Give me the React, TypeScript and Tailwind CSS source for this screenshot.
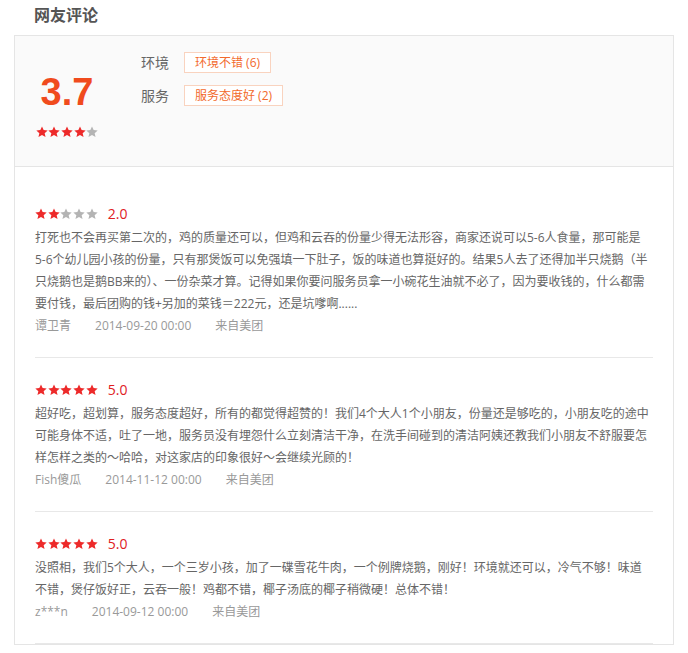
import React from "react";

const FONT = { fontFamily: '"Open Sans", "Noto Sans CJK SC", sans-serif' };

function Star({ on }: { on: boolean }) {
  return (
    <svg width="12" height="12" viewBox="0 0 24 24" className="block">
      <path
        d="M12 0.8l3.3 7.3 8 .8-6 5.4 1.8 7.9L12 18.1l-7.1 4.1 1.8-7.9-6-5.4 8-.8z"
        fill={on ? "#ed2a2a" : "#b4b4b4"}
      />
    </svg>
  );
}

function Stars({ n }: { n: number }) {
  return (
    <div className="flex gap-[0.7px]">
      {[0, 1, 2, 3, 4].map((i) => (
        <Star key={i} on={i < n} />
      ))}
    </div>
  );
}

type Review = { stars: number; score: string; text: string | string[]; name: string; date: string };

const reviews: Review[] = [
  {
    stars: 2,
    score: "2.0",
    text: [
      "打死也不会再买第二次的，鸡的质量还可以，但鸡和云吞的份量少得无法形容，商家还说可以5-6人食量，那可能是",
      "5-6个幼儿园小孩的份量，只有那煲饭可以免强填一下肚子，饭的味道也算挺好的。结果5人去了还得加半只烧鹅（半",
      "只烧鹅也是鹅BB来的）、一份杂菜才算。记得如果你要问服务员拿一小碗花生油就不必了，因为要收钱的，什么都需",
      "要付钱，最后团购的钱+另加的菜钱＝222元，还是坑嗲啊......",
    ],
    name: "谭卫青",
    date: "2014-09-20 00:00",
  },
  {
    stars: 5,
    score: "5.0",
    text: "超好吃，超划算，服务态度超好，所有的都觉得超赞的！我们4个大人1个小朋友，份量还是够吃的，小朋友吃的途中可能身体不适，吐了一地，服务员没有埋怨什么立刻清洁干净，在洗手间碰到的清洁阿姨还教我们小朋友不舒服要怎样怎样之类的～哈哈，对这家店的印象很好～会继续光顾的！",
    name: "Fish傻瓜",
    date: "2014-11-12 00:00",
  },
  {
    stars: 5,
    score: "5.0",
    text: "没照相，我们5个大人，一个三岁小孩，加了一碟雪花牛肉，一个例牌烧鹅，刚好！环境就还可以，冷气不够！味道不错，煲仔饭好正，云吞一般！鸡都不错，椰子汤底的椰子稍微硬！总体不错！",
    name: "z***n",
    date: "2014-09-12 00:00",
  },
];

export default function App() {
  return (
    <div className="w-[688px] h-[653px] overflow-hidden bg-white" style={FONT}>
      <div className="h-[35px] pl-[34px] pt-[3px] text-[16px] leading-[24px] font-bold text-[#555]">
        网友评论
      </div>
      <div className="mx-[14px] border border-[#e5e5e5]">
        <div className="flex h-[131px] bg-[#fafafa] border-b border-[#e5e5e5] pl-[20px] pt-[16px]">
          <div className="w-[64px] flex flex-col items-center">
            <div
              className="mt-[21px] text-[38px] leading-[38px] font-bold text-[#f04b1d]"
              style={{ fontFamily: '"Liberation Sans", Arial, sans-serif' }}
            >
              3.7
            </div>
            <div className="mt-[15px]">
              <Stars n={4} />
            </div>
          </div>
          <div className="ml-[42px] flex flex-col gap-[12px]">
            <div className="flex items-center h-[21px]">
              <span className="w-[43px] text-[14px] text-[#666]">环境</span>
              <span className="h-[21px] px-[10px] border border-[#f9d3bf] bg-white text-[12px] leading-[19px] text-[#f26a2c]">
                环境不错 (6)
              </span>
            </div>
            <div className="flex items-center h-[21px]">
              <span className="w-[43px] text-[14px] text-[#666]">服务</span>
              <span className="h-[21px] px-[10px] border border-[#f9d3bf] bg-white text-[12px] leading-[19px] text-[#f26a2c]">
                服务态度好 (2)
              </span>
            </div>
          </div>
        </div>
        <div className="px-[20px] pt-[15px]">
          {reviews.map((r, i) => (
            <div key={i} className="border-b border-[#e8e8e8] pt-[23px] pb-[20px]">
              <div className="flex items-center h-[18px]">
                <Stars n={r.stars} />
                <span className="ml-[10px] text-[14px] leading-[18px] text-[#e0201f]">{r.score}</span>
              </div>
              <div className="mt-[4px] text-[12px] leading-[22px] text-[#666]">
                {Array.isArray(r.text)
                  ? r.text.map((line, j) => (
                      <div key={j} className="whitespace-nowrap">
                        {line}
                      </div>
                    ))
                  : r.text}
              </div>
              <div className="flex text-[12px] leading-[22px] text-[#999]">
                <span className="mr-[24px]">{r.name}</span>
                <span className="mr-[24px]">{r.date}</span>
                <span>来自美团</span>
              </div>
            </div>
          ))}
        </div>
      </div>
    </div>
  );
}
